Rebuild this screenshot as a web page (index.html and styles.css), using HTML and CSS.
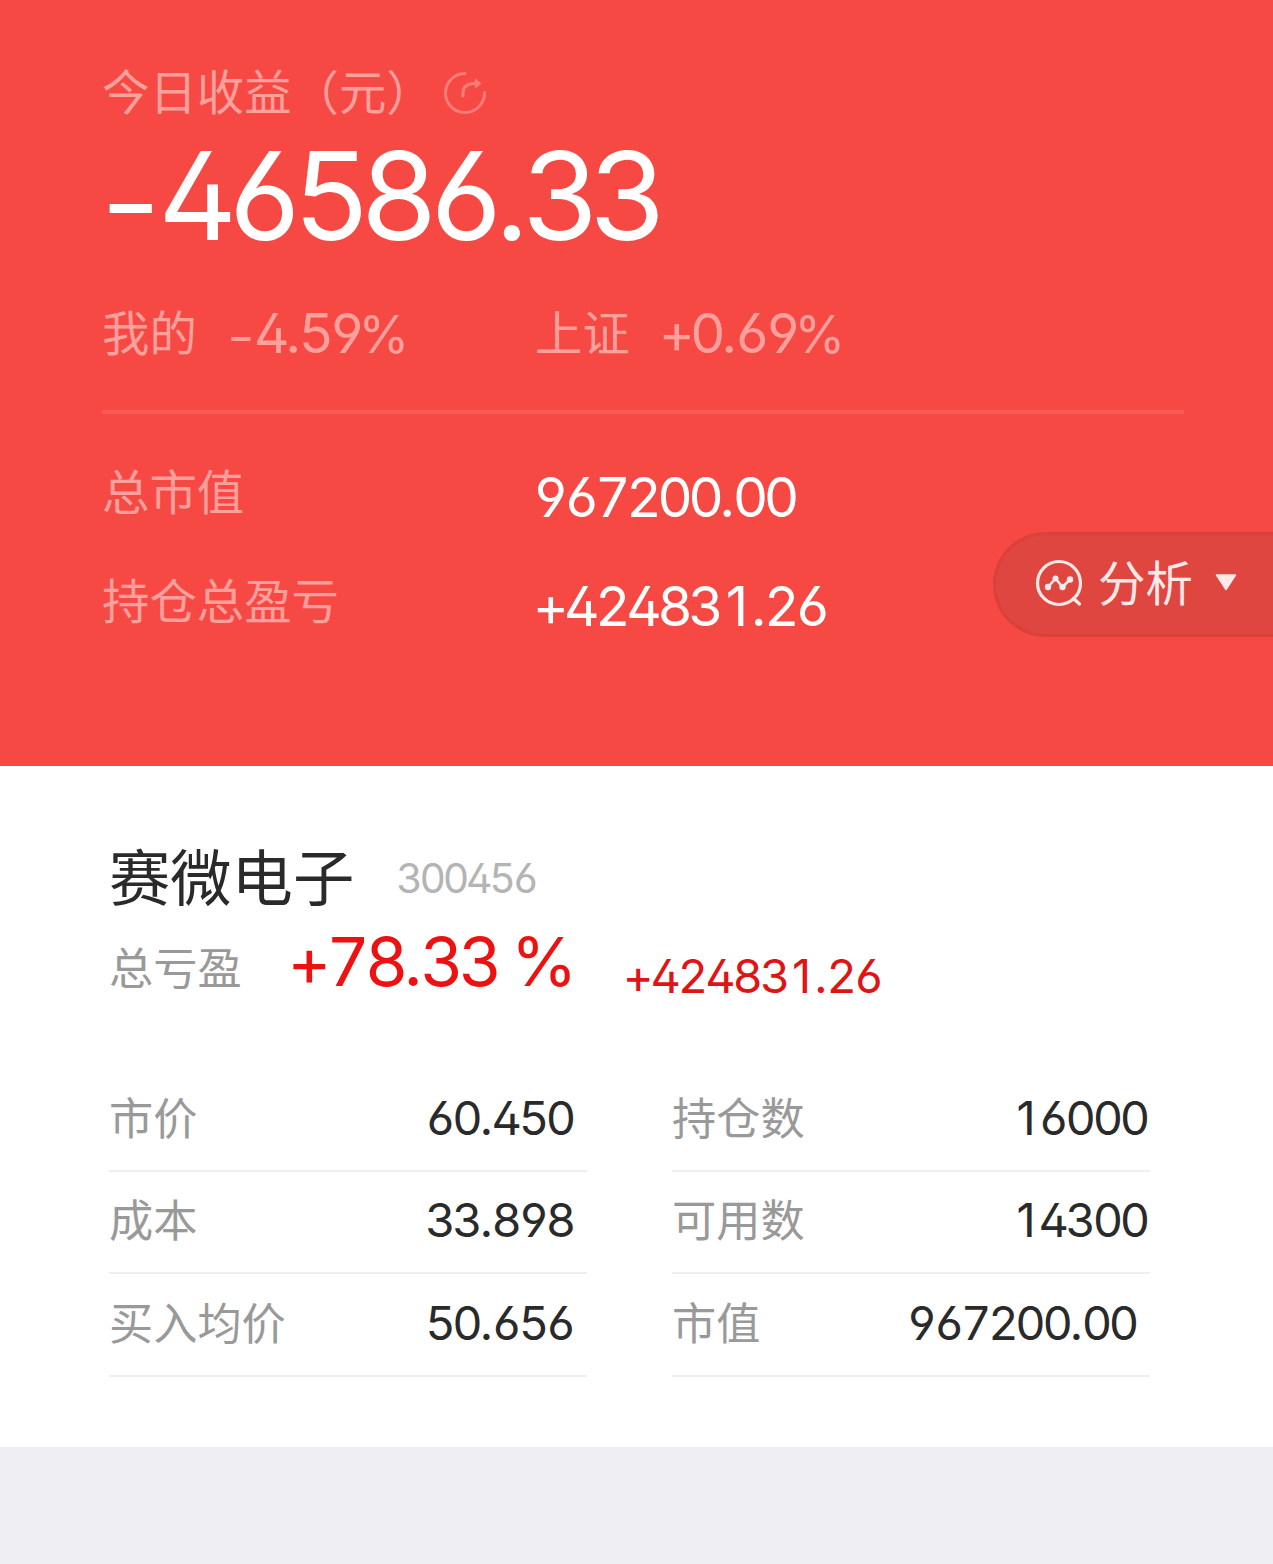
FILE: index.html
```html
<!DOCTYPE html>
<html lang="zh-CN">
<head>
<meta charset="utf-8">
<title>持仓</title>
<link rel="stylesheet" href="styles.css">
</head>
<body>
<header class="summary">
  <div class="title-row">
    <span>今日收益（元）</span>
    <svg class="share" viewBox="0 0 44 44" width="44" height="44" fill="none" stroke="currentColor" stroke-width="3" stroke-linecap="round" stroke-linejoin="round">
      <path d="M22 2.500A19.500 19.500 0 1 0 41.500 21.500"/>
      <path d="M20 25V21.500C20 15.500 24 12.500 32 12.500"/>
      <path d="M32.500 8.500L37.500 12.500L32.500 16.500Z" fill="currentColor" stroke-width="1.500"/>
    </svg>
  </div>
  <div class="num total"><span class="minus">-</span>46586<span class="dot">.</span>33</div>
  <div class="rates">
    <div class="rate"><span class="label">我的</span><span class="num mid"><span class="minus">-</span>4<span class="dot">.</span>59<span class="pc">%</span></span></div>
    <div class="rate index"><span class="label">上证</span><span class="num mid">+0<span class="dot">.</span>69<span class="pc">%</span></span></div>
  </div>
  <div class="divider"></div>
  <div class="row"><span class="label">总市值</span><span class="num mid">967200<span class="dot">.</span>00</span></div>
  <div class="row"><span class="label">持仓总盈亏</span><span class="num mid">+42483<span class="one">1</span><span class="dot">.</span>26</span></div>
  <div class="analysis">
    <svg viewBox="0 0 48 48" width="48" height="48" fill="none" stroke="currentColor" stroke-width="3.200" stroke-linecap="round" stroke-linejoin="round">
      <circle cx="24" cy="24" r="21.500"/>
      <path d="M38.500 39.500L44.500 45"/>
      <path d="M13 28L20.500 19.500L27.500 28L35 20.500" stroke-width="2.600"/>
      <g fill="currentColor" stroke="none"><circle cx="13" cy="28" r="3.200"/><circle cx="20.500" cy="19.500" r="3"/><circle cx="27.500" cy="28" r="3.200"/><circle cx="35" cy="20.500" r="3.200"/></g>
    </svg>
    <span class="analysis-text">分析</span>
    <svg class="caret" viewBox="0 0 22 17" width="22" height="17"><path d="M1.500 1H20.500L11 15.500Z" fill="currentColor" stroke="currentColor" stroke-width="1.500" stroke-linejoin="round"/></svg>
  </div>
</header>
<main class="holding">
  <div class="stock"><h1>赛微电子</h1><span class="num code">300456</span></div>
  <div class="profit"><span class="label">总亏盈</span><span class="num percent">+78<span class="dot">.</span>33<span class="unit">%</span></span><span class="num amount">+42483<span class="one">1</span><span class="dot">.</span>26</span></div>
  <div class="grid">
    <div class="cell"><span class="label">市价</span><span class="num">60<span class="dot">.</span>450</span></div>
    <div class="cell wide"><span class="label">持仓数</span><span class="num"><span class="one">1</span>6000</span></div>
    <div class="cell"><span class="label">成本</span><span class="num">33<span class="dot">.</span>898</span></div>
    <div class="cell wide"><span class="label">可用数</span><span class="num"><span class="one">1</span>4300</span></div>
    <div class="cell"><span class="label">买入均价</span><span class="num">50<span class="dot">.</span>656</span></div>
    <div class="cell"><span class="label">市值</span><span class="num">967200<span class="dot">.</span>00</span></div>
  </div>
</main>
</body>
</html>
```
FILE: styles.css
```css
* { box-sizing: border-box; }
body {
  margin: 0;
  min-height: 1564px;
  background: #efeef3;
  font-family: "Noto Sans CJK SC", sans-serif;
}
.num {
  font-family: Inter, sans-serif;
  font-feature-settings: "tnum", "cv02", "cv03", "cv04";
  white-space: nowrap;
  line-height: 1;
}
.minus {
  display: inline-block;
  transform: translateY(.06em) scale(1.08, .9);
}
.dot { margin: 0 .05em 0 .01em; }
.one {
  display: inline-block;
  width: .57em;
  padding-right: .13em;
  text-align: right;
  font-feature-settings: normal;
}
.pc {
  margin-left: -.04em;
  font-size: .94em;
}

.summary {
  position: relative;
  height: 766px;
  padding: 59px 89px 0 102px;
  background: #f74944;
  color: #ffa09d;
  font-size: 47.4px;
}
.title-row {
  display: flex;
  align-items: center;
  height: 60px;
}
.share {
  margin: 8px 0 0 9px;
  color: #fb7c78;
}
.total {
  display: flex;
  align-items: center;
  height: 153px;
  margin-left: -11px;
  color: #fff;
  font-size: 122px;
  letter-spacing: -.098em;
}
.mid {
  font-size: 55px;
  letter-spacing: -.084em;
}
.rates {
  display: grid;
  grid-template-columns: 433px 1fr;
  height: 122px;
}
.rate {
  display: flex;
  align-items: center;
}
.rate .label {
  width: 121px;
  margin-top: -5px;
}
.rate.index .label { width: 124px; }
.divider {
  height: 4px;
  margin: 16px 0 29px;
  background: #f95a56;
}
.row {
  display: grid;
  grid-template-columns: 431px 1fr;
  align-items: center;
  height: 109px;
}
.row .label { margin-top: -17px; }
.row .num { color: #fff; }
.analysis {
  position: absolute;
  top: 532px;
  right: 0;
  display: flex;
  align-items: center;
  width: 280px;
  height: 105px;
  padding: 0 0 4px 39px;
  border: 3px solid #d9413c;
  border-right: 0;
  border-radius: 53px 0 0 53px;
  background: #df463f;
  color: #ffe9e8;
}
.analysis-text {
  margin: -4px 22px 0 15px;
}

.holding {
  height: 681px;
  padding: 68px 123px 0 109px;
  background: #fff;
  color: #2a2a2a;
}
.stock {
  display: flex;
  align-items: center;
  height: 88px;
}
h1 {
  margin: -7px 42px 0 0;
  font-size: 61.3px;
  font-weight: 400;
}
.code {
  color: #b4b4b4;
  font-size: 41px;
  letter-spacing: -.081em;
}
.holding .label {
  margin-top: -7px;
  color: #999;
  font-size: 44.2px;
}
.profit {
  display: flex;
  align-items: center;
  height: 84px;
}
.profit .label { margin-top: 3px; }
.percent {
  margin: -5px 0 0 46px;
  color: #ed1111;
  font-size: 67.5px;
  letter-spacing: -.077em;
}
.unit { margin-left: .2em; }
.amount {
  margin: 22px 0 0 51px;
  color: #df1515;
  font-size: 47px;
  letter-spacing: -.066em;
}
.grid {
  display: grid;
  grid-template-columns: 478px 478px;
  grid-auto-rows: 102.5px;
  column-gap: 85px;
  margin-top: 63px;
}
.cell {
  display: flex;
  align-items: center;
  justify-content: space-between;
  padding-right: 14px;
  border-bottom: 2px solid #efefef;
}
.cell.wide { padding-right: 3px; }
.cell .num {
  margin-top: -4px;
  font-size: 47px;
  letter-spacing: -.071em;
}
```
